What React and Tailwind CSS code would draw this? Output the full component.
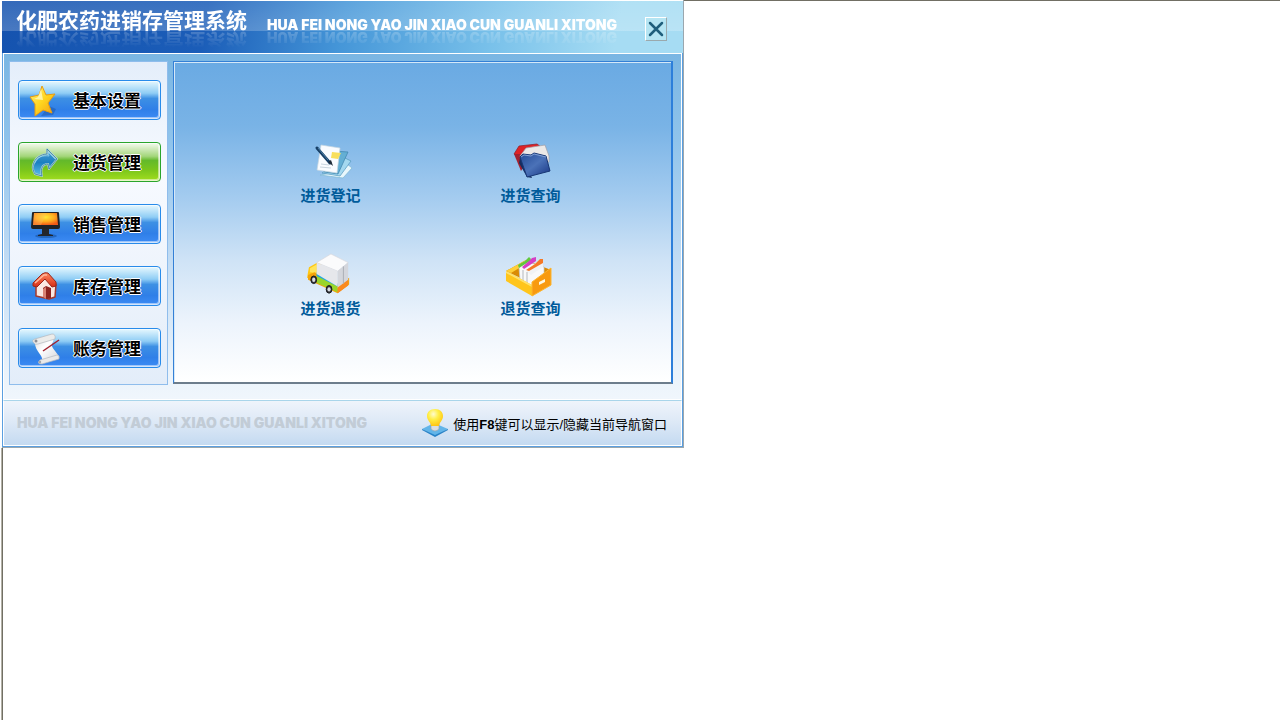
import { useState } from "react";

const NAV_ITEMS = [
  { id: "settings", label: "基本设置", Icon: StarIcon },
  { id: "purchase", label: "进货管理", Icon: ArrowIcon },
  { id: "sales", label: "销售管理", Icon: MonitorIcon },
  { id: "stock", label: "库存管理", Icon: HouseIcon },
  { id: "accounts", label: "账务管理", Icon: ScrollIcon },
];

const ACTIONS = [
  { id: "register", label: "进货登记", Icon: NotesIcon },
  { id: "query", label: "进货查询", Icon: FoldersIcon },
  { id: "return", label: "进货退货", Icon: TruckIcon },
  { id: "returnQuery", label: "退货查询", Icon: DrawerIcon },
];

function StarIcon() {
  return (
    <svg width="34" height="34" viewBox="0 0 34 34" aria-hidden="true">
      <defs>
        <linearGradient id="star" x1="0" y1="0" x2="1" y2="1">
          <stop offset="0" stopColor="#fff27a" />
          <stop offset=".5" stopColor="#ffd51f" />
          <stop offset="1" stopColor="#f29a12" />
        </linearGradient>
      </defs>
      <path d="M14 33l12-1 3-6-7-3z" fill="#1c4f9c" opacity=".45" />
      <path d="M15 3l4 9 9-1-7 9 4 10-9-3-8 6 0-12-5-7 9-2z" fill="url(#star)" stroke="#e79c12" strokeLinejoin="round" />
      <path d="M14 6l2 11-9-1 4-2z" fill="#fff9bd" opacity=".8" />
    </svg>
  );
}

function ArrowIcon() {
  return (
    <svg width="34" height="34" viewBox="0 0 34 34" aria-hidden="true">
      <defs>
        <linearGradient id="arrow" x1="0" y1="0" x2="0" y2="1">
          <stop offset="0" stopColor="#4fa3d4" />
          <stop offset=".5" stopColor="#1b7fc2" />
          <stop offset="1" stopColor="#5bc0ea" />
        </linearGradient>
      </defs>
      <path
        d="M20 4l10 10-8 10-1-5c-5 0-8 4-6 12l-7-2C3 22 7 10 20 9z"
        fill="url(#arrow)"
        stroke="#b5d9d4"
        strokeWidth="2"
        strokeLinejoin="round"
      />
      <path d="M20 4l10 10-8 10-1-5c-5 0-8 4-6 12l-7-2C3 22 7 10 20 9z" fill="none" stroke="#226f9d" strokeWidth=".7" />
      <path d="M8 18c2-6 8-8 14-7l-1-4 7 7" fill="none" stroke="#9ddaf3" opacity=".7" />
    </svg>
  );
}

function MonitorIcon() {
  return (
    <svg width="34" height="34" viewBox="0 0 34 34" aria-hidden="true">
      <defs>
        <radialGradient id="screen" cx=".5" cy=".35" r=".65">
          <stop offset="0" stopColor="#ffe936" />
          <stop offset=".55" stopColor="#ffac20" />
          <stop offset="1" stopColor="#f15a17" />
        </radialGradient>
      </defs>
      <ellipse cx="19" cy="29" rx="11" ry="2" fill="#124991" opacity=".5" />
      <path d="M15 22h7v5l4 1v1H11v-1l4-1z" fill="#23262c" />
      <path d="M6 5h25q1 0 1 1l1 14q0 2-2 2H6q-2 0-2-2L5 6q0-1 1-1z" fill="#202226" />
      <path d="M7 6h23l1 12H6z" fill="url(#screen)" />
      <path d="M7 6h13l-6 12H6z" fill="#ffc05a" opacity=".4" />
    </svg>
  );
}

function HouseIcon() {
  return (
    <svg width="34" height="34" viewBox="0 0 34 34" aria-hidden="true">
      <defs>
        <linearGradient id="roof" x1="0" y1="0" x2="0" y2="1">
          <stop offset="0" stopColor="#ff8a60" />
          <stop offset="1" stopColor="#d72b15" />
        </linearGradient>
      </defs>
      <path d="M9 16l8-9 12 8-1 13-6 2-13-3z" fill="#fbe8e2" stroke="#a5392d" strokeWidth="1.5" strokeLinejoin="round" />
      <path d="M16 28v-9l3-2 5 2v10l-4 1z" fill="#8e2420" />
      <path d="M16 28v-8l3-2v12z" fill="#d98375" />
      <path
        d="M6 14L15 5q3-2 6-1l8 9v4l-4 1-7-8-8 8-4-1z"
        fill="url(#roof)"
        stroke="#98261b"
        strokeLinejoin="round"
      />
      <path d="M8 14l9-8 3 0" fill="none" stroke="#ffb99d" strokeWidth="1.5" />
    </svg>
  );
}

function ScrollIcon() {
  return (
    <svg width="34" height="34" viewBox="0 0 34 34" aria-hidden="true">
      <defs>
        <linearGradient id="paper" x1="0" y1="0" x2="1" y2="1">
          <stop offset="0" stopColor="#d9dadb" />
          <stop offset=".4" stopColor="#ffffff" />
          <stop offset="1" stopColor="#d2d4d8" />
        </linearGradient>
      </defs>
      <path d="M8 12l19-6-1 5c-4 5 3 8 6 15l-17 5C17 24 8 21 8 12z" fill="url(#paper)" />
      <path d="M7 12Q4 9 8 8l17-5q4 0 3 5L11 13q-3 1-4-1z" fill="#ececea" stroke="#b5b8bd" strokeWidth=".7" />
      <path d="M13 29l17-5q3 0 2 4l-17 5q-6 0-2-4z" fill="#e9e9e9" stroke="#b5b8bd" strokeWidth=".7" />
      <circle cx="9" cy="10" r="1.5" fill="#8c8f95" />
      <circle cx="13" cy="31" r="1.2" fill="#a2a5aa" />
      <path d="M16 20L32 9" stroke="#a01f2c" strokeWidth="1.5" />
    </svg>
  );
}

function NotesIcon() {
  return (
    <svg width="44" height="44" viewBox="0 0 44 44" aria-hidden="true">
      <path d="M12 35l23 3 9-10-5-4-10 8z" fill="#e9f7fc" stroke="#7db7d3" strokeWidth=".7" />
      <path d="M14 33l18 3 11-15-6-3z" fill="#a4d8ef" stroke="#5398bd" strokeWidth=".7" />
      <path d="M26 11l14 1-10 22-14-2z" fill="#64afd4" stroke="#3d83ac" strokeWidth=".7" />
      <path d="M13 5l19 3-3 25-20-3z" fill="#fafcff" stroke="#c6d5e0" strokeWidth=".7" />
      <path d="M24 12l9 1-3 6-7-1z" fill="#f8df5e" />
      <path d="M13 24l8 1M12 27l11 1" stroke="#c9d5df" />
      <path d="M9 8l13 15" stroke="#173f66" strokeWidth="3" strokeLinecap="round" />
      <path d="M10 8l10 12" stroke="#4d7fa6" strokeWidth="1" />
      <path d="M20 22l5 4-2-6z" fill="#202c39" />
    </svg>
  );
}

function FoldersIcon() {
  return (
    <svg width="44" height="44" viewBox="0 0 44 44" aria-hidden="true">
      <defs>
        <linearGradient id="blueFolder" x1="0" y1="0" x2="1" y2="1">
          <stop offset="0" stopColor="#234a96" />
          <stop offset=".5" stopColor="#4b72b8" />
          <stop offset="1" stopColor="#173583" />
        </linearGradient>
      </defs>
      <path d="M6 14l5-8 18-2 8 6-12 16z" fill="#df2326" stroke="#8d1d28" strokeWidth=".7" />
      <path d="M6 14l7 17 5-8-5-9z" fill="#a32130" />
      <path d="M12 16l6-8 19-3 4 11 0 6-24 3z" fill="#ece9e7" stroke="#a09da6" strokeWidth=".7" />
      <path d="M12 18l-1 5 8 14 5 1-9-20z" fill="#152d60" />
      <path d="M12 17l3-3 8 1 3-2 12 3 4 15-23 6z" fill="url(#blueFolder)" stroke="#183775" strokeLinejoin="round" />
      <path d="M13 17l3-2 7 1 3-2 12 3" fill="none" stroke="#82a0d3" />
    </svg>
  );
}

function TruckIcon() {
  return (
    <svg width="46" height="44" viewBox="0 0 48 46" aria-hidden="true">
      <path d="M2 15l9-5 4 2v20L0 26z" fill="#ffc713" />
      <path d="M3 16l7-4v9l-7-1z" fill="#ffe55b" />
      <path d="M1 23l7-3 22 14 14-8v7L32 42 1 28z" fill="#f4a30a" />
      <path d="M10 22l22 12v7L10 31z" fill="#99d52b" />
      <path d="M10 20l22 12v3L10 24z" fill="#26a7dc" />
      <path d="M10 10L25 1l18 9-11 9z" fill="#fbfbfc" stroke="#d6d6dc" strokeWidth=".7" />
      <path d="M10 10l22 9v16L10 22z" fill="#e6e7eb" />
      <path d="M32 19l11-9v19l-11 8z" fill="#d4d6dc" />
      <path d="M32 36l11-8v6l-11 8z" fill="#fa891e" />
      <path d="M38 14v18" stroke="#aaadb5" />
      <g fill="#303238" stroke="#17191d">
        <ellipse cx="7" cy="28" rx="3" ry="4" />
        <ellipse cx="23" cy="38" rx="3" ry="4" />
      </g>
      <ellipse cx="7" cy="28" rx="1.7" ry="2.3" fill="#d9dce0" />
      <ellipse cx="23" cy="38" rx="1.7" ry="2.3" fill="#d9dce0" />
    </svg>
  );
}

function DrawerIcon() {
  return (
    <svg width="48" height="44" viewBox="0 0 48 44" aria-hidden="true">
      <path d="M0 18L20 7l25 10-18 14z" fill="#d98b05" />
      <path d="M0 18L20 7l3 2L5 20z" fill="#ffcf37" />
      <path d="M13 14l6-6 19 6v14l-11 6-13-7z" fill="#f8f8f9" stroke="#c5c8cc" strokeWidth=".7" />
      <path d="M12 12l7-4 4-4 2 2-1 2-11 7z" fill="#62c83b" />
      <path d="M16 14l7-6 3-3 4-1 0 4-12 8z" fill="#d53fc5" />
      <path d="M20 18l9-7 8-5v8l-12 8z" fill="#f1f2f4" />
      <path d="M20 17l9-6 5-5 3 0 0 4-14 8z" fill="#f57926" />
      <path d="M17 17v11M21 19v12" stroke="#b4b7bc" />
      <path d="M0 18l26 14v11L0 28z" fill="#ffc51b" />
      <path d="M0 18l26 14v2L0 20z" fill="#ffe26b" />
      <path d="M26 29l19-14v17L26 43z" fill="#f89a10" stroke="#fdb52e" />
      <path d="M33 29l6-3v3l-6 3z" fill="#fff8e0" />
    </svg>
  );
}

function BulbIcon() {
  return (
    <svg width="28" height="30" viewBox="0 0 28 30" aria-hidden="true">
      <defs>
        <radialGradient id="bulb" cx=".4" cy=".3" r=".7">
          <stop offset="0" stopColor="#fffbd0" />
          <stop offset=".45" stopColor="#ffef48" />
          <stop offset="1" stopColor="#ffc513" />
        </radialGradient>
      </defs>
      <path d="M1 21l12-6 14 6-13 7z" fill="#62b5e9" />
      <path d="M1 21l13 6 13-6v1l-13 7-13-7z" fill="#2983c7" />
      <path d="M10 15h8v6q-4 4-8 0z" fill="#dadde0" stroke="#9ca7b0" strokeWidth=".7" />
      <path d="M14 1c5 0 8 3 8 7 0 5-4 6-4 10h-8c0-4-4-5-4-10 0-4 3-7 8-7z" fill="url(#bulb)" />
    </svg>
  );
}

function TitleBar() {
  return (
    <header className="flex h-[53px] items-start border-t border-white bg-[linear-gradient(180deg,rgba(255,255,255,.13),rgba(255,255,255,.22)_57%,transparent_57%),linear-gradient(100deg,#1553af_0%,#1b5db8_30%,#4596d8_50%,#79c1ea_72%,#a6dcf3_90%)] pr-4 pl-[14px] text-white">
      <h1 className="pt-[7px] text-[21px] leading-[26px] font-bold whitespace-nowrap [-webkit-box-reflect:below_-6px_linear-gradient(transparent_40%,rgba(255,255,255,.25))]">
        化肥农药进销存管理系统
      </h1>
      <p className="ml-5 pt-4 font-[Inter,sans-serif] text-[14px] leading-4 font-black whitespace-nowrap [-webkit-box-reflect:below_-4px_linear-gradient(transparent_40%,rgba(255,255,255,.25))]">
        HUA FEI NONG YAO JIN XIAO CUN GUANLI XITONG
      </p>
      <button
        type="button"
        aria-label="关闭"
        className="mt-4 ml-auto flex h-6 w-[22px] shrink-0 items-center justify-center border border-t-white border-r-[#9aa9ad] border-b-[#9aa9ad] border-l-white bg-[#b5e5f3]"
      >
        <svg width="16" height="16" viewBox="0 0 16 16" aria-hidden="true">
          <path d="M2 2l12 12M14 2L2 14" stroke="#1f5f7c" strokeWidth="2.5" strokeLinecap="round" />
        </svg>
      </button>
    </header>
  );
}

function NavButton({ item, active, onClick }) {
  const { Icon, label } = item;
  const look = active
    ? "border-[#2aa52c] bg-[linear-gradient(180deg,#f5fbef_0%,#a3d67a_35%,#63b92b_46%,#79c51c_70%,#a3de1e_100%)]"
    : "border-[#288bea] bg-[linear-gradient(180deg,#e6f8fe_0%,#8fcdf5_32%,#3d90e4_46%,#2f7fe8_75%,#3d8cf5_100%)]";
  return (
    <button
      type="button"
      aria-pressed={active}
      onClick={onClick}
      className={`flex h-10 w-full items-center rounded border pl-2 shadow-[inset_0_0_0_1px_rgba(255,255,255,.55),inset_-1px_-1px_0_1px_rgba(255,255,255,.5)] ${look}`}
    >
      <Icon />
      <span className="ml-3 pt-[3px] text-[17px] leading-5 font-bold text-black [text-shadow:1px_0_#fff,-1px_0_#fff,0_1px_#fff,0_-1px_#fff]">
        {label}
      </span>
    </button>
  );
}

export default function App() {
  const [current, setCurrent] = useState("purchase");

  return (
    <div className="flex min-h-screen flex-col bg-white pl-px font-['Liberation_Sans','Noto_Sans_CJK_SC',sans-serif]">
      <div className="flex items-start pl-px">
        <div className="w-full max-w-[682px] border-r border-b border-[#9ba7ae]">
          <TitleBar />

          <div className="border-x border-b border-[#5b9fe0]">
            <main className="flex gap-[5px] border border-white bg-[linear-gradient(180deg,#7ab6e3_0%,#8fc3eb_25%,#c2dcf4_60%,#eaf3fb_92%,#f0f6fc_100%)] pt-[7px] pr-[8px] pb-[14px] pl-[5px]">
              <nav className="w-[159px] shrink-0 border border-[#8fbdec] bg-[linear-gradient(180deg,#e4eefa,#f7faff_35%,#eef4fc_65%,#e3edf9)] pt-[18px] pr-[6px] pb-4 pl-2">
                <ul className="flex flex-col gap-[22px]">
                  {NAV_ITEMS.map((item) => (
                    <li key={item.id}>
                      <NavButton item={item} active={item.id === current} onClick={() => setCurrent(item.id)} />
                    </li>
                  ))}
                </ul>
              </nav>

              <section className="mb-px flex-1 border border-r-2 border-b-2 border-t-[#3480d6] border-r-[#2d7fda] border-b-[#6d7d8c] border-l-[#3480d6] bg-[linear-gradient(180deg,#6aaae3_0%,#79b3e6_20%,#a3cbef_42%,#cfe3f6_62%,#edf4fc_82%,#ffffff_100%)] pt-[73px] pl-4 shadow-[inset_1px_1px_0_#d5e8f8]">
                <div className="grid grid-cols-[200px_200px] justify-center gap-y-10">
                  {ACTIONS.map(({ id, label, Icon }) => (
                    <button
                      key={id}
                      type="button"
                      className="flex h-[73px] flex-col items-center justify-end justify-self-center text-[#005b9a]"
                    >
                      <Icon />
                      <span className="text-[15px] leading-6 font-bold">{label}</span>
                    </button>
                  ))}
                </div>
              </section>
            </main>

            <footer className="flex h-[46px] items-center justify-between border border-t-[#a9d5ea] border-white bg-[linear-gradient(180deg,#eff4fb,#dce8f6_50%,#c4daf1)] pr-[14px] pl-[13px]">
              <p className="font-[Inter,sans-serif] text-[14px] leading-4 font-black whitespace-nowrap text-[#c2ccd6]">
                HUA FEI NONG YAO JIN XIAO CUN GUANLI XITONG
              </p>
              <p className="flex items-center gap-1 text-[13px] leading-5 whitespace-nowrap text-black">
                <BulbIcon />
                <span className="pt-1">
                  使用<b>F8</b>键可以显示/隐藏当前导航窗口
                </span>
              </p>
            </footer>
          </div>
        </div>
        <div className="flex-1 border-t border-[#716f64]" />
      </div>
      <div className="flex flex-1 border-l border-[#b3b1a6]">
        <div className="flex-1 border-l border-[#716f64]" />
      </div>
    </div>
  );
}
